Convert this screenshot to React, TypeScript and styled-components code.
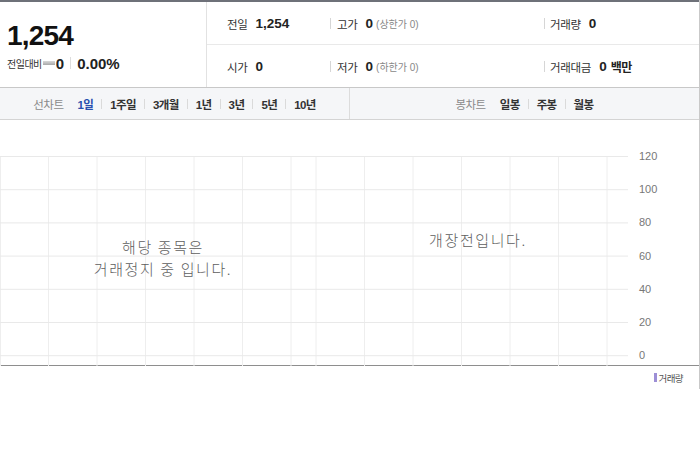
import React from "react";
import styled, { createGlobalStyle } from "styled-components";

const GlobalStyle = createGlobalStyle`
  html, body { margin: 0; padding: 0; background: #fff; }
  body { font-family: "Liberation Sans", "Noto Sans CJK KR", sans-serif; color: #222; }
  * { box-sizing: border-box; }
`;

const Widget = styled.div`
  width: 700px;
  border-right: 1px solid #c9c9c9;
`;

const Header = styled.div`
  display: grid;
  grid-template-columns: 207px 1fr;
  height: 88px;
  border-top: 2px solid #6e7179;
  border-bottom: 1px solid #c8c8c8;
`;

const PricePanel = styled.div`
  border-right: 1px solid #e2e2e2;
  padding: 18px 0 0 7px;
  display: flex;
  flex-direction: column;
`;

const Price = styled.div`
  font-size: 28px;
  line-height: 32px;
  font-weight: 700;
  letter-spacing: -0.8px;
  color: #111;
`;

const ChangeRow = styled.div`
  display: flex;
  align-items: center;
  height: 20px;
  margin-top: 1px;
`;

const SmallLabel = styled.span`
  font-family: "Noto Sans CJK KR", sans-serif;
  font-size: 10px;
  letter-spacing: -0.5px;
  color: #333;
`;

const FlatMark = styled.span`
  display: inline-block;
  width: 12px;
  height: 4px;
  margin: 0 1px 0 1px;
  background: linear-gradient(#d8d8d8, #a8a8a8);
`;

const BigValue = styled.span`
  font-size: 15px;
  font-weight: 700;
  color: #222;
`;

const Bar = styled.span<{ $h?: number; $c?: string; $m?: number }>`
  display: inline-block;
  width: 1px;
  height: ${(p) => p.$h ?? 11}px;
  background: ${(p) => p.$c ?? "#d6d6d6"};
  margin: 0 ${(p) => p.$m ?? 6}px;
`;

const InfoPanel = styled.div`
  display: grid;
  grid-template-rows: 1fr 1fr;
`;

const InfoRow = styled.div<{ $last?: boolean }>`
  display: grid;
  grid-template-columns: 123px 214px 1fr;
  align-items: center;
  padding-top: 2px;
  border-bottom: ${(p) => (p.$last ? "none" : "1px solid #e9e9e9")};
`;

const Cell = styled.div<{ $pad?: number }>`
  display: flex;
  align-items: center;
  padding-left: ${(p) => p.$pad ?? 0}px;
`;

const Label = styled.span`
  font-family: "Noto Sans CJK KR", sans-serif;
  font-size: 11.5px;
  color: #333;
  margin-right: 8px;
  letter-spacing: -0.3px;
`;

const Value = styled.span`
  font-family: "Liberation Sans", "Noto Sans CJK KR", sans-serif;
  font-size: 13.5px;
  font-weight: 700;
  color: #222;
`;

const Unit = styled.span`
  font-family: "Noto Sans CJK KR", sans-serif;
  font-size: 12px;
  font-weight: 700;
  letter-spacing: -0.4px;
  color: #222;
  margin-left: 4px;
`;

const Note = styled.span`
  font-family: "Liberation Sans", "Noto Sans CJK KR", sans-serif;
  font-size: 10px;
  color: #888;
  margin-left: 3px;
`;

const TabBar = styled.div`
  display: grid;
  grid-template-columns: 350px 1fr;
  height: 32px;
  background: #f5f6f8;
  border-bottom: 1px solid #d4d4d4;
`;

const TabGroup = styled.div<{ $divider?: boolean }>`
  display: flex;
  align-items: center;
  justify-content: center;
  border-right: ${(p) => (p.$divider ? "1px solid #dcdcdc" : "none")};
`;

const TabTitle = styled.span`
  font-family: "Noto Sans CJK KR", sans-serif;
  font-size: 11.5px;
  color: #8a8a8a;
  letter-spacing: -0.5px;
  margin-right: 14px;
`;

const Tab = styled.span<{ $active?: boolean }>`
  font-family: "Liberation Sans", "Noto Sans CJK KR", sans-serif;
  font-size: 11.5px;
  font-weight: 700;
  letter-spacing: -0.6px;
  color: ${(p) => (p.$active ? "#2a4fae" : "#333")};
`;

const ChartArea = styled.div`
  position: relative;
  display: flex;
  height: 246px;
  border-bottom: 1px solid #8e8e8e;
`;

const Axis = styled.div`
  display: flex;
  flex-direction: column;
  gap: 19.2px;
  padding: 29px 0 0 11px;
`;

const AxisLabel = styled.span`
  font-family: "Liberation Sans", sans-serif;
  font-size: 11px;
  line-height: 14px;
  height: 14px;
  color: #777;
`;

const Message = styled.div<{ $x: number; $y: number }>`
  position: absolute;
  left: ${(p) => p.$x}px;
  top: ${(p) => p.$y}px;
  transform: translateX(-50%);
  display: flex;
  flex-direction: column;
  align-items: center;
  font-family: "Noto Sans CJK KR", sans-serif;
  font-weight: 300;
  font-size: 15px;
  letter-spacing: 1.6px;
  color: #5e5e5e;
  white-space: nowrap;
`;

const MessageLine = styled.span`
  display: block;
  height: 22px;
  line-height: 22px;
`;

const Legend = styled.div`
  display: flex;
  justify-content: flex-end;
  align-items: center;
  height: 23px;
  padding-right: 16px;
`;

const LegendMark = styled.span`
  display: inline-block;
  width: 3px;
  height: 9px;
  background: #9d8fd6;
  margin-right: 2px;
`;

const LegendText = styled.span`
  font-family: "Noto Sans CJK KR", sans-serif;
  font-size: 9.5px;
  letter-spacing: -0.6px;
  color: #555;
`;

const vLines = [0.5, 48.5, 97, 145.5, 194, 242.5, 291, 316, 364.5, 413, 461.5, 510, 558.5, 607];
const hLines = Array.from({ length: 7 }, (_, i) => 36.5 + i * 33.2);

const Grid = () => (
  <svg width="628" height="246" style={{ display: "block", flex: "none" }}>
    {vLines.map((x) => (
      <line key={"v" + x} x1={x} x2={x} y1={36} y2={246} stroke="#eeeeee" strokeWidth={1} />
    ))}
    {hLines.map((y) => (
      <line key={"h" + y} x1={0} x2={628} y1={y} y2={y} stroke="#e9e9e9" strokeWidth={1} />
    ))}
  </svg>
);

const shortTabs = ["1일", "1주일", "3개월", "1년", "3년", "5년", "10년"];
const candleTabs = ["일봉", "주봉", "월봉"];

export default function App() {
  return (
    <>
      <GlobalStyle />
      <Widget>
        <Header>
          <PricePanel>
            <Price>1,254</Price>
            <ChangeRow>
              <SmallLabel>전일대비</SmallLabel>
              <FlatMark />
              <BigValue>0</BigValue>
              <Bar $h={12} $c="#dddddd" $m={6} />
              <BigValue>0.00%</BigValue>
            </ChangeRow>
          </PricePanel>
          <InfoPanel>
            <InfoRow>
              <Cell $pad={20}>
                <Label>전일</Label>
                <Value>1,254</Value>
              </Cell>
              <Cell>
                <Bar $m={0} />
                <Cell $pad={6}>
                  <Label>고가</Label>
                  <Value>0</Value>
                  <Note>(상한가 0)</Note>
                </Cell>
              </Cell>
              <Cell>
                <Bar $m={0} />
                <Cell $pad={5}>
                  <Label>거래량</Label>
                  <Value>0</Value>
                </Cell>
              </Cell>
            </InfoRow>
            <InfoRow $last>
              <Cell $pad={20}>
                <Label>시가</Label>
                <Value>0</Value>
              </Cell>
              <Cell>
                <Bar $m={0} />
                <Cell $pad={6}>
                  <Label>저가</Label>
                  <Value>0</Value>
                  <Note>(하한가 0)</Note>
                </Cell>
              </Cell>
              <Cell>
                <Bar $m={0} />
                <Cell $pad={5}>
                  <Label>거래대금</Label>
                  <Value>0</Value>
                  <Unit>백만</Unit>
                </Cell>
              </Cell>
            </InfoRow>
          </InfoPanel>
        </Header>
        <TabBar>
          <TabGroup $divider>
            <TabTitle>선차트</TabTitle>
            {shortTabs.map((t, i) => (
              <React.Fragment key={t}>
                {i > 0 && <Bar $h={10} $c="#dadada" $m={8} />}
                <Tab $active={i === 0}>{t}</Tab>
              </React.Fragment>
            ))}
          </TabGroup>
          <TabGroup>
            <TabTitle>봉차트</TabTitle>
            {candleTabs.map((t, i) => (
              <React.Fragment key={t}>
                {i > 0 && <Bar $h={10} $c="#dadada" $m={8} />}
                <Tab>{t}</Tab>
              </React.Fragment>
            ))}
          </TabGroup>
        </TabBar>
        <ChartArea>
          <Grid />
          <Axis>
            {["120", "100", "80", "60", "40", "20", "0"].map((l) => (
              <AxisLabel key={l}>{l}</AxisLabel>
            ))}
          </Axis>
          <Message $x={163} $y={116}>
            <MessageLine>해당 종목은</MessageLine>
            <MessageLine>거래정지 중 입니다.</MessageLine>
          </Message>
          <Message $x={478} $y={109}>
            <MessageLine>개장전입니다.</MessageLine>
          </Message>
        </ChartArea>
        <Legend>
          <LegendMark />
          <LegendText>거래량</LegendText>
        </Legend>
      </Widget>
    </>
  );
}
